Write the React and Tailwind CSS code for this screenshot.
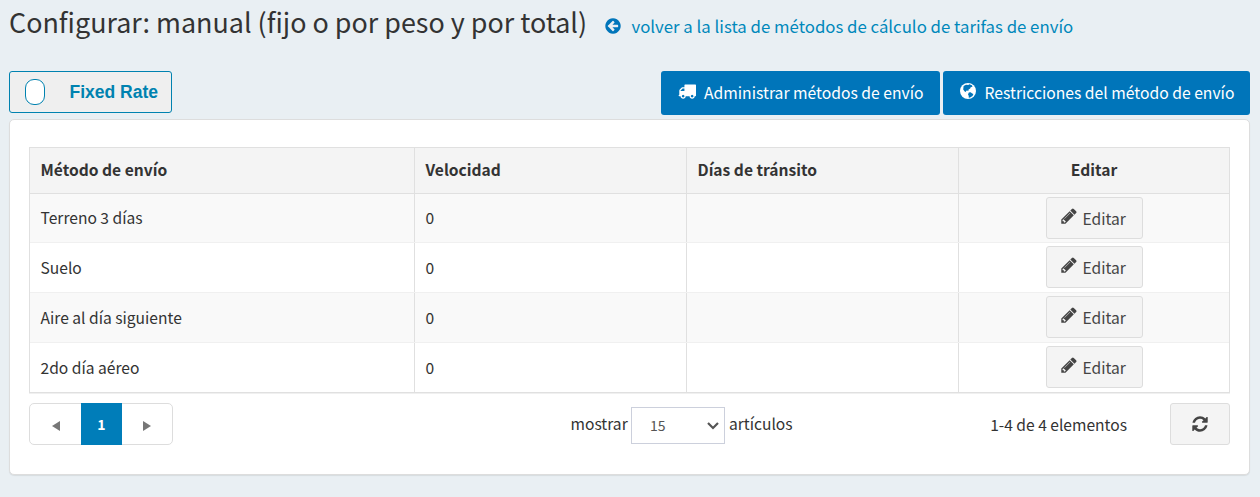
const ICONS = {
  truck: 'M640 1408q0-52-38-90t-90-38-90 38-38 90 38 90 90 38 90-38 38-90zm-384-512h384v-256h-158q-13 0-22 9l-195 195q-9 9-9 22v30zm1280 512q0-52-38-90t-90-38-90 38-38 90 38 90 90 38 90-38 38-90zm256-1088v1024q0 15-4 26.5t-13.5 18.5-16.5 11.5-23.5 6-22.5 2-25.5 0-22.5-.5q0 106-75 181t-181 75-181-75-75-181h-384q0 106-75 181t-181 75-181-75-75-181h-64q-3 0-22.5.5t-25.5 0-22.5-2-23.5-6-16.5-11.5-13.5-18.5-4-26.5q0-26 19-45t45-19v-320q0-8-.5-35t0-38 2.5-34.5 6.5-37 14-30.5 22.5-30l198-198q19-19 50.5-32t58.5-13h160v-192q0-26 19-45t45-19h1024q26 0 45 19t19 45z',
  back: 'M1408 960v-128q0-26-19-45t-45-19h-502l189-189q19-19 19-45t-19-45l-91-91q-18-18-45-18t-45 18l-362 362-91 91q-18 18-18 45t18 45l91 91 362 362q18 18 45 18t45-18l91-91q18-18 18-45t-18-45l-189-189h502q26 0 45-19t19-45zm256-64q0 209-103 385.5t-279.5 279.5-385.5 103-385.5-103-279.5-279.5-103-385.5 103-385.5 279.5-279.5 385.5-103 385.5 103 279.5 279.5 103 385.5z',
  pencil: 'M491 1536l91-91-235-235-91 91v107h128v128h107zm523-928q0-22-22-22-10 0-17 7l-542 542q-7 7-7 17 0 22 22 22 10 0 17-7l542-542q7-7 7-17zm-54-192l416 416-832 832h-416v-416zm683 96q0 53-37 90l-166 166-416-416 166-165q36-38 90-38 53 0 91 38l235 234q37 39 37 91z',
  refresh: 'M1639 1056q0 5-1 7-64 268-268 434.5t-478 166.5q-146 0-282.5-55t-243.5-157l-129 129q-19 19-45 19t-45-19-19-45v-448q0-26 19-45t45-19h448q26 0 45 19t19 45-19 45l-137 137q71 66 161 102t187 36q134 0 250-65t186-179q11-17 53-117 8-23 30-23h192q13 0 22.5 9.5t9.5 22.5zm25-800v448q0 26-19 45t-45 19h-448q-26 0-45-19t-19-45 19-45l138-138q-148-137-349-137-134 0-250 65t-186 179q-11 17-53 117-8 23-30 23h-199q-13 0-22.5-9.5t-9.5-22.5v-7q65-268 270-434.5t480-166.5q146 0 284 55.5t245 156.5l130-129q19-19 45-19t45 19 19 45z',
};

function Icon({ name, className }) {
  return (
    <svg viewBox="0 0 1792 1792" className={className} fill="currentColor">
      <path d={ICONS[name]} />
    </svg>
  );
}

function Globe({ className }) {
  return (
    <svg viewBox="0 0 18 18" className={className}>
      <circle cx="9" cy="9" r="8" fill="white" />
      <path d="M4.6 4 7 2.8l2.3.3 1-.9 2.6 1 .6 1.5-1.8.5-.5 1.3-1.6.9-.3 1.5-1.2-.3-1.3.3.5 1.4-1.6-.7-1.5-2.2zM9.8 10.6l1.8-.3 1.6 1.1 1.2.6-.9 2-2.4 1.5-1.3.2-.1-2-.7-1.3z" fill="#0075ba" />
    </svg>
  );
}

const rows = ['Terreno 3 días', 'Suelo', 'Aire al día siguiente', '2do día aéreo'];

const grid = 'grid grid-cols-[385px_272px_272px_1fr]';

function Row({ name, index }) {
  const height = index === 0 ? 'h-12' : 'h-[50px] border-t border-[#f0f0f0]';
  const textTop = index === 0 ? 'pt-[11px]' : 'pt-3';
  return (
    <div className={`${grid} divide-x divide-[#e0e0e0] ${height} ${index % 2 === 0 ? 'bg-[#f9f9f9]' : 'bg-white'}`}>
      <div className={`pl-[10.5px] ${textTop}`}>{name}</div>
      <div className={`pl-[10.5px] ${textTop}`}>0</div>
      <div />
      <div className="flex justify-center pt-[3px]">
        <button className="flex h-[42px] w-[97px] items-center rounded-[3px] border border-[#ddd] bg-[#f4f4f4] pl-[13.5px] text-[#444]">
          <Icon name="pencil" className="mb-1 mr-1 size-[18px]" />
          <span className="pl-[0.5px]">Editar</span>
        </button>
      </div>
    </div>
  );
}

export default function App() {
  return (
    <main className="flex h-[497px] w-[1260px] flex-col bg-[#e9eff3] px-[9px] font-['Noto_Sans_CJK_SC',sans-serif] text-[15.6px] leading-6 text-[#333]">
      <header className="flex h-[71px] items-start">
        <h1 className="mt-[3px] w-[577px] whitespace-nowrap text-[26.9px] leading-[38px]">Configurar: manual (fijo o por peso y por total)</h1>
        <a className="ml-[18px] mt-[14px] flex items-center whitespace-nowrap text-[16.8px] text-[#0088bb]">
          <Icon name="back" className="mr-[9.5px] size-[18px] text-[#0075ba]" />
          volver a la lista de métodos de cálculo de tarifas de envío
        </a>
      </header>
      <div className="flex h-12 items-start justify-between pr-px">
        <button className="flex h-[42px] w-[163px] items-center rounded-[3px] border border-[#0082b0] bg-[#efefef] pl-[15px] font-['Liberation_Sans',sans-serif] text-[17.5px] font-bold text-[#0082b0]">
          <span className="mr-[24.5px] h-[26px] w-5 rounded-[9px] border border-[#0082b0] bg-white" />
          Fixed Rate
        </button>
        <div className="flex gap-[3px] text-[15.7px] text-white">
          <button className="flex h-11 w-[279px] items-center whitespace-nowrap rounded-[3px] bg-[#0075ba] pl-[17px]">
            <Icon name="truck" className="mb-1 mr-2 size-[18px]" />
            Administrar métodos de envío
          </button>
          <button className="flex h-11 w-[307px] items-center whitespace-nowrap rounded-[3px] bg-[#0075ba] pl-[15.5px]">
            <Globe className="mb-1 mr-2 size-[18px]" />
            Restricciones del método de envío
          </button>
        </div>
      </div>
      <section className="h-[356px] w-[1241px] rounded-[5px] border border-[#ddd] bg-white px-[19px] pt-[27px] shadow-[0_1px_1px_rgba(0,0,0,0.08)]">
        <div className="h-[246px] border border-[#e0e0e0] shadow-[0_1px_0_#f0f0f0]">
          <div className={`${grid} h-[46px] divide-x divide-[#e0e0e0] border-b border-[#e0e0e0] bg-[#f4f4f4] font-bold`}>
            <div className="pl-[10.5px] pt-[9px]">Método de envío</div>
            <div className="pl-[10.5px] pt-[9px]">Velocidad</div>
            <div className="pl-[10.5px] pt-[9px]">Días de tránsito</div>
            <div className="pt-[9px] text-center">Editar</div>
          </div>
          <div>
            {rows.map((name, i) => (
              <Row key={name} name={name} index={i} />
            ))}
          </div>
        </div>
        <footer className="mt-[10px] flex h-[42px]">
          <div className="flex w-[144px] items-stretch rounded-[5px] border border-[#ddd]">
            <div className="flex w-[51px] items-center justify-center">
              <svg viewBox="0 0 8 10" className="mt-[3px] h-[10px] w-2 fill-[#777]"><path d="M8 0v10L0 5z" /></svg>
            </div>
            <div className="-my-px flex w-[41px] items-center justify-center bg-[#007db9] text-[14px] font-bold text-white">1</div>
            <div className="flex w-[50px] items-center justify-center">
              <svg viewBox="0 0 8 10" className="mt-[3px] h-[10px] w-2 fill-[#777]"><path d="M0 0v10l8-5z" /></svg>
            </div>
          </div>
          <div className="ml-[397.5px] flex items-start">
            <span className="mt-2 w-[60.5px] whitespace-nowrap">mostrar</span>
            <div className="mt-1 flex h-[37px] w-[94px] items-center justify-between border border-[#ccd0dc] pb-px pl-[18px] pr-[5px] text-[14px] text-[#555]">
              15
              <svg viewBox="0 0 12 8" className="mt-[2px] h-2 w-3 fill-none stroke-[#555]" strokeWidth="2.2"><path d="m1 1 5 5 5-5" /></svg>
            </div>
            <span className="ml-1 mt-2">artículos</span>
          </div>
          <span className="ml-auto mr-[43px] mt-[9px]">1-4 de 4 elementos</span>
          <button className="flex w-[60px] items-center justify-center rounded-[3px] border border-[#ddd] bg-[#f4f4f4] text-[#444]">
            <Icon name="refresh" className="size-[18px]" />
          </button>
        </footer>
      </section>
    </main>
  );
}
